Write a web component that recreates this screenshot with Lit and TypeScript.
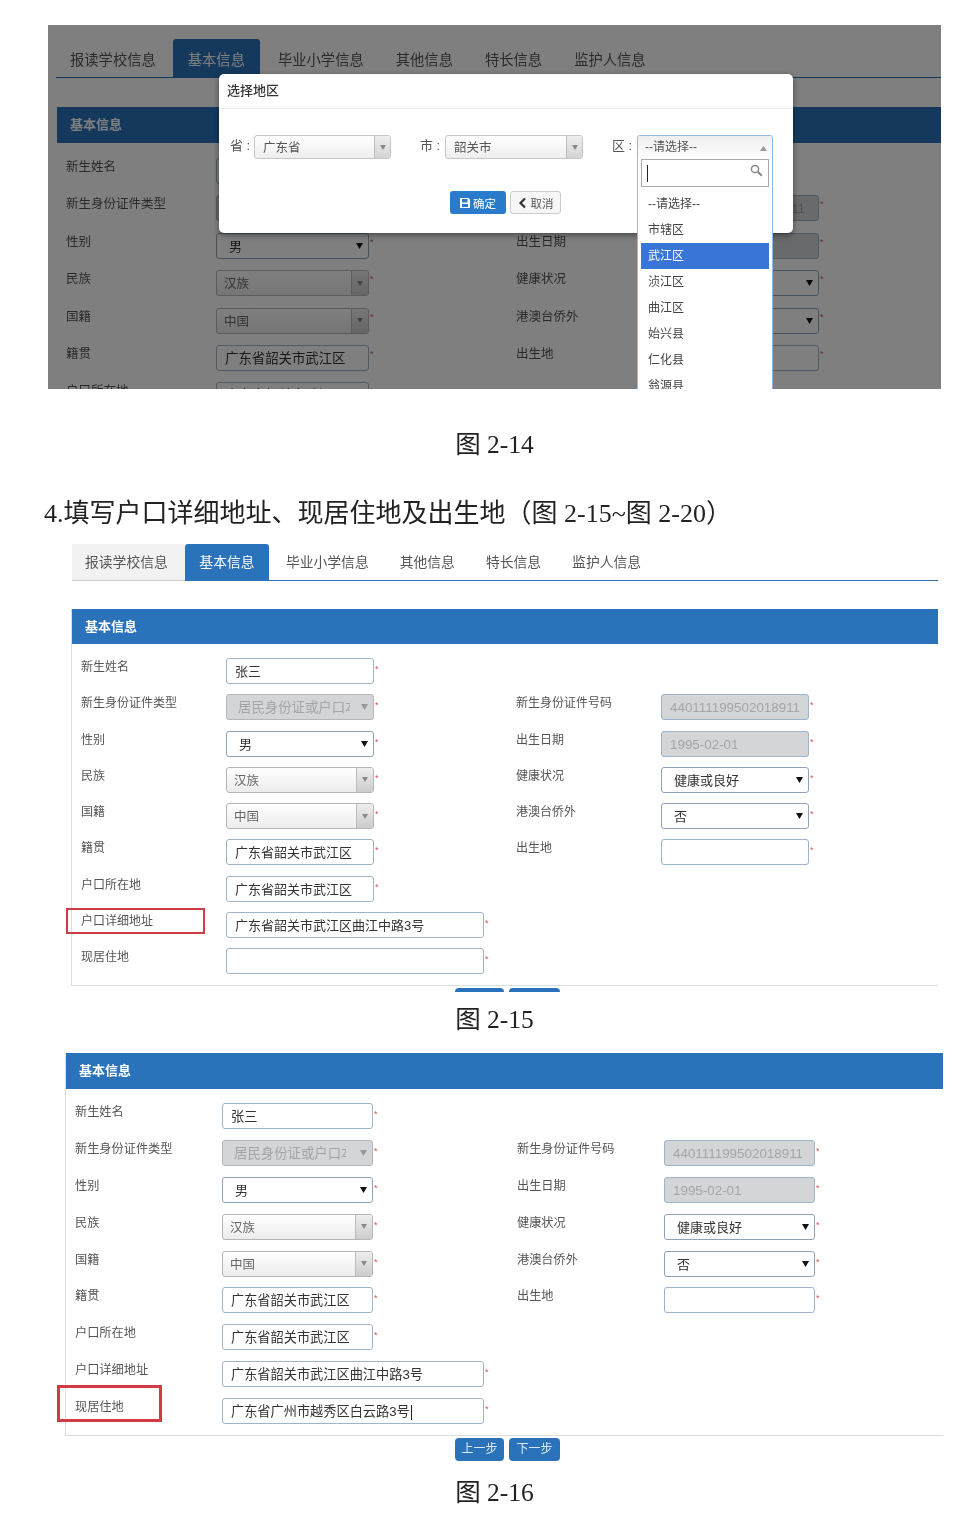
import { LitElement, html, css, nothing } from "lit";
import { customElement } from "lit/decorators.js";

type Kind = "text" | "off" | "native" | "chosen" | "offsel";
interface Field { label: string; kind: Kind; value: string; wide?: boolean; caret?: boolean; mark?: boolean; }
interface Row { left: Field; right?: Field; }

const rowsFor = (lastValue: string, caret: boolean, mark: "detail" | "current" | ""): Row[] => [
  { left: { label: "新生姓名", kind: "text", value: "张三" } },
  {
    left: { label: "新生身份证件类型", kind: "offsel", value: "居民身份证或户口本" },
    right: { label: "新生身份证件号码", kind: "off", value: "440111199502018911" },
  },
  {
    left: { label: "性别", kind: "native", value: "男" },
    right: { label: "出生日期", kind: "off", value: "1995-02-01" },
  },
  {
    left: { label: "民族", kind: "chosen", value: "汉族" },
    right: { label: "健康状况", kind: "native", value: "健康或良好" },
  },
  {
    left: { label: "国籍", kind: "chosen", value: "中国" },
    right: { label: "港澳台侨外", kind: "native", value: "否" },
  },
  {
    left: { label: "籍贯", kind: "text", value: "广东省韶关市武江区" },
    right: { label: "出生地", kind: "text", value: "" },
  },
  { left: { label: "户口所在地", kind: "text", value: "广东省韶关市武江区" } },
  { left: { label: "户口详细地址", kind: "text", value: "广东省韶关市武江区曲江中路3号", wide: true, mark: mark === "detail" } },
  { left: { label: "现居住地", kind: "text", value: lastValue, wide: true, caret, mark: mark === "current" } },
];

const tabNames = ["报读学校信息", "基本信息", "毕业小学信息", "其他信息", "特长信息", "监护人信息"];
const options = ["--请选择--", "市辖区", "武江区", "浈江区", "曲江区", "始兴县", "仁化县", "翁源县"];

@customElement("app-root")
export class AppRoot extends LitElement {
  static styles = css`
    :host { display: block; width: 977px; height: 1539px; background: #fff; font-family: "Liberation Sans", "Noto Sans CJK SC", sans-serif; overflow: hidden; filter: blur(0.3px); }
    .caption { font-family: "Liberation Serif", "Noto Sans CJK SC", serif; font-size: 25.5px; line-height: 30px; height: 30px; color: #222; text-align: center; padding-left: 12px; }
    .cap1 { margin-top: 41px; }
    .cap2 { margin-top: 13px; }
    .cap3 { margin-top: 17px; }
    .heading { font-family: "Liberation Serif", "Noto Sans CJK SC", serif; font-size: 26px; line-height: 36px; height: 36px; color: #222; margin: 36px 0 12px 44px; white-space: nowrap; }

    .panel { position: relative; margin: 25px 0 0 48px; width: 893px; height: 364px; overflow: hidden; background: #fff; }
    .shade { position: absolute; inset: 0; background: rgba(0, 0, 0, 0.5); }
    .panel-inner { padding: 14px 0 0 8px; }

    .tabs { display: flex; align-items: stretch; color: #555; }
    .tab { display: flex; align-items: center; padding: 0 15.5px; white-space: nowrap; }
    .tab.on { background: #2a73bb; color: #fff; border-radius: 3px 3px 0 0; }
    .tab.first { background: #f2f2f2; }
    .tabs-top { height: 38px; border-bottom: 1px solid #2a73bb; font-size: 14.3px; }
    .tabs-top .tab { padding: 0 16px; }
    .tabs-top .tab.first { background: transparent; padding: 0 17px 0 14px; }
    .tabs-top .tab.on { padding: 0 15px; }
    .tabs-top .tab.after { padding-left: 18px; }
    .tabs-mid { margin-left: 72px; width: 866px; height: 36px; border-bottom: 1px solid #2a73bb; font-size: 13.8px; }
    .tabs-mid .tab { padding-bottom: 2px; }
    .tabs-mid .tab.on { padding: 0 14.4px 2px; }
    .tabs-mid .tab.first { padding: 0 17.2px 2px 13px; box-shadow: 0 1px 0 #ccc; }
    .tabs-mid .tab.after { padding-left: 17px; }

    .form { border-left: 1px solid #ddd; border-bottom: 1px solid #ddd; box-sizing: border-box; position: relative; }
    .form-a { margin: 28px 0 0 71px; width: 867px; height: 377px; --pad: 9px; --left: 435px; --lw: 145px; --cw: 148px; --ww: 258px; --row: 36.25px; --head: 35px; --fs: 12px; --ifs: 13px; --star: 6px; }
    .form-b { margin: 18px 0 0 65px; width: 878px; height: 383px; --pad: 9px; --left: 442px; --lw: 147px; --cw: 151px; --ww: 262px; --row: 36.9px; --head: 36px; --fs: 12.2px; --ifs: 13.2px; --star: 6px; }
    .form-p { margin: 29px 0 0 1px; width: 884px; --pad: 9px; --left: 450px; --lw: 150px; --cw: 153px; --ww: 263px; --row: 37.4px; --head: 36px; --fs: 12.5px; --ifs: 13.4px; --star: 4px; border: 0; }
    .form-head { height: var(--head); background: #2a73bb; color: #fff; font-size: 13px; font-weight: 700; line-height: var(--head); padding-left: 13px; }
    .rows { padding: 14px 0 0 var(--pad); display: grid; grid-auto-rows: var(--row); }
    .form-p .rows { padding-top: 15px; }
    .row { display: grid; grid-template-columns: var(--left) 1fr; }
    .cell { display: flex; align-items: flex-start; }
    .label { position: relative; width: var(--lw); flex: none; font-size: var(--fs); line-height: 18px; color: #555; white-space: nowrap; }
    .mark { position: absolute; box-sizing: border-box; border: 2px solid #d23b45; }
    .form-a .mark { left: -15px; top: -4px; width: 139px; height: 26px; }
    .form-b .mark { left: -18px; top: -13px; width: 105px; height: 37px; border-width: 3px; }
    .star { color: #d9534f; font-size: 9px; line-height: 10px; margin: var(--star) 0 0 1px; }

    .ctl { box-sizing: border-box; flex: none; width: var(--cw); height: 26px; border: 1px solid #9db4cb; border-radius: 3px; font-size: var(--ifs); line-height: 24px; color: #333; padding: 2px 0 0 8px; background: #fff; position: relative; white-space: nowrap; overflow: hidden; display: flex; align-items: center; }
    .ctl.wide { width: var(--ww); }
    .ctl.off { background: #d3d5d7; color: #a3a5a8; font-size: 13.4px; }
    .ctl.native { padding-left: 12px; border-color: #8ea3ba; font-size: 13px; }
    .ctl.chosen { background: linear-gradient(#fff, #ececec); border-color: #b4b6b8; color: #666; font-size: 12.5px; padding-left: 7px; }
    .ctl.offsel { background: #d3d5d7; color: #a3a5a8; border-color: #b4b6b8; font-size: 13.4px; padding-left: 11px; }
    .clip { display: block; width: 112px; overflow: hidden; }
    .tri { position: absolute; right: 5px; top: 9px; width: 7px; height: 6px; }
    .seg { position: absolute; right: 0; top: 0; bottom: 0; width: 16px; background: linear-gradient(#eee, #ccc); border-left: 1px solid #bbb; display: flex; align-items: center; justify-content: center; }
    .seg svg { width: 6px; height: 5px; }
    .caret { display: inline-block; width: 1px; height: 15px; background: #222; margin-left: 1px; }

    .strip { overflow: hidden; margin-left: 455px; display: flex; gap: 5px; padding-top: 2px; height: 4px; }
    .strip i { display: block; width: 49px; height: 20px; background: #2a73bb; border-radius: 4px; }
    .strip i + i { width: 51px; }
    .steps { display: flex; gap: 5px; margin: 2px 0 0 455px; }
    .step { width: 49px; height: 23px; background: #2a73bb; border-radius: 4px; color: #dfe9f4; font-size: 12px; line-height: 22px; text-align: center; }
    .step + .step { width: 51px; }

    .modal { position: absolute; left: 171px; top: 49px; width: 574px; height: 159px; background: #fff; border-radius: 5px; box-shadow: 0 2px 6px rgba(0, 0, 0, 0.45); }
    .modal-head { height: 34px; line-height: 34px; padding-left: 8px; font-size: 13px; font-weight: 500; color: #333; border-bottom: 1px solid #eee; }
    .modal-fields { display: flex; padding: 26px 0 0 11px; height: 24px; }
    .pick { display: flex; margin-right: 29px; font-size: 13px; color: #555; }
    .pick-label { width: 24px; line-height: 22px; white-space: nowrap; }
    .pick-label.m { width: 25px; }
    .pick-box { position: relative; width: 137px; }
    .pick-box.c { width: 138px; }
    .pick-box.d { width: 136px; }
    .sel { box-sizing: border-box; height: 24px; border: 1px solid #c4c6c8; border-radius: 3px; background: linear-gradient(#fff, #eee); font-size: 12.5px; line-height: 24px; padding-left: 8px; color: #555; position: relative; overflow: hidden; }
    .sel .seg { width: 15px; background: linear-gradient(#eee, #d4d4d4); }
    .modal-btns { display: flex; justify-content: center; gap: 4px; margin-top: 32px; padding-right: 2px; }
    .btn { box-sizing: border-box; height: 23px; display: flex; align-items: center; justify-content: center; gap: 2px; font-size: 11.5px; border-radius: 3px; }
    .btn svg { width: 12px; height: 12px; }
    .btn.ok { width: 56px; background: #2a7bc9; color: #fff; }
    .btn.no { width: 51px; border: 1px solid #ccc; background: #f6f6f6; color: #555; }

    .drop { position: absolute; left: 0; top: 0; width: 136px; height: 300px; box-sizing: border-box; background: #fff; border: 1px solid #8fb8e2; border-radius: 3px 3px 0 0; padding: 0 3px; overflow: hidden; }
    .drop-head { height: 23px; line-height: 23px; font-size: 12px; color: #555; background: linear-gradient(#eee, #fff); margin: 0 -3px; padding-left: 7px; position: relative; }
    .drop-head svg { position: absolute; right: 5px; top: 10px; width: 7px; height: 5px; }
    .search { box-sizing: border-box; height: 28px; border: 1px solid #aaa; position: relative; display: flex; align-items: center; padding-left: 5px; }
    .search .bar { width: 1px; height: 17px; background: #222; }
    .search svg { position: absolute; right: 5px; top: 4px; width: 13px; height: 13px; }
    .opts { padding-top: 4px; }
    .opt { height: 26px; line-height: 26px; font-size: 12px; color: #444; padding-left: 7px; white-space: nowrap; }
    .opt.sel-on { background: #3875d7; color: #fff; }
  `;

  private arrow(fill: string, cls = "") {
    return html`<svg class=${cls} viewBox="0 0 7 6" aria-hidden="true"><path d="M0 0h7L3.5 6z" fill=${fill}></path></svg>`;
  }

  private control(f: Field) {
    const wide = f.wide ? " wide" : "";
    switch (f.kind) {
      case "off":
        return html`<div class="ctl off${wide}">${f.value}</div>`;
      case "native":
        return html`<div class="ctl native">${f.value}${this.arrow("#111", "tri")}</div>`;
      case "chosen":
        return html`<div class="ctl chosen">${f.value}<span class="seg">${this.arrow("#888")}</span></div>`;
      case "offsel":
        return html`<div class="ctl offsel"><span class="clip">${f.value}</span>${this.arrow("#999", "tri")}</div>`;
      default:
        return html`<div class="ctl${wide}">${f.value}${f.caret ? html`<span class="caret"></span>` : nothing}</div>`;
    }
  }

  private cell(f?: Field) {
    if (!f) return html`<div class="cell"></div>`;
    return html`<div class="cell">
      <div class="label">${f.label}${f.mark ? html`<span class="mark"></span>` : nothing}</div>
      ${this.control(f)}
      <span class="star">*</span>
    </div>`;
  }

  private form(cls: string, rows: Row[]) {
    return html`<section class="form ${cls}">
      <div class="form-head">基本信息</div>
      <div class="rows">
        ${rows.map((r) => html`<div class="row">${this.cell(r.left)}${this.cell(r.right)}</div>`)}
      </div>
    </section>`;
  }

  private tabs(cls: string) {
    return html`<nav class="tabs ${cls}">
      ${tabNames.map((t, i) => html`<div class="tab ${i === 0 ? "first" : i === 1 ? "on" : i === 2 ? "after" : ""}">${t}</div>`)}
    </nav>`;
  }

  private select(text: string) {
    return html`<div class="sel">${text}<span class="seg">${this.arrow("#888")}</span></div>`;
  }

  private modal() {
    return html`<div class="modal">
      <div class="modal-head">选择地区</div>
      <div class="modal-fields">
        <div class="pick"><span class="pick-label">省 :</span><div class="pick-box">${this.select("广东省")}</div></div>
        <div class="pick"><span class="pick-label m">市 :</span><div class="pick-box c">${this.select("韶关市")}</div></div>
        <div class="pick">
          <span class="pick-label m">区 :</span>
          <div class="pick-box d">
            <div class="drop">
              <div class="drop-head">--请选择--<svg viewBox="0 0 7 5" aria-hidden="true"><path d="M3.5 0L7 5H0z" fill="#999"></path></svg></div>
              <div class="search">
                <span class="bar"></span>
                <svg viewBox="0 0 13 13" aria-hidden="true"><circle cx="5" cy="5" r="3.6" fill="none" stroke="#888" stroke-width="1.5"></circle><path d="M7.8 7.8l4 4" stroke="#888" stroke-width="2"></path></svg>
              </div>
              <div class="opts">
                ${options.map((o, i) => html`<div class="opt ${i === 2 ? "sel-on" : ""}">${o}</div>`)}
              </div>
            </div>
          </div>
        </div>
      </div>
      <div class="modal-btns">
        <div class="btn ok">
          <svg viewBox="0 0 12 12" aria-hidden="true"><path fill-rule="evenodd" d="M1 1h8.500L11 2.500V11H1zM3 2v3.500h5.500V2zM3 7v3h6V7z" fill="#fff"></path></svg>确定
        </div>
        <div class="btn no">
          <svg viewBox="0 0 12 12" aria-hidden="true"><path d="M8 1.500L3.500 6 8 10.500" fill="none" stroke="#333" stroke-width="2.200"></path></svg>取消
        </div>
      </div>
    </div>`;
  }

  render() {
    const topRows = rowsFor("", false, "").slice(0, 7);
    return html`
      <section class="panel">
        <div class="panel-inner">
          ${this.tabs("tabs-top")}
          ${this.form("form-p", topRows)}
        </div>
        <div class="shade"></div>
        ${this.modal()}
      </section>
      <div class="caption cap1">图 2-14</div>
      <div class="heading">4.填写户口详细地址、现居住地及出生地（图 2-15~图 2-20）</div>
      ${this.tabs("tabs-mid")}
      ${this.form("form-a", rowsFor("", false, "detail"))}
      <div class="strip"><i></i><i></i></div>
      <div class="caption cap2">图 2-15</div>
      ${this.form("form-b", rowsFor("广东省广州市越秀区白云路3号", true, "current"))}
      <div class="steps"><div class="step">上一步</div><div class="step">下一步</div></div>
      <div class="caption cap3">图 2-16</div>
    `;
  }
}
